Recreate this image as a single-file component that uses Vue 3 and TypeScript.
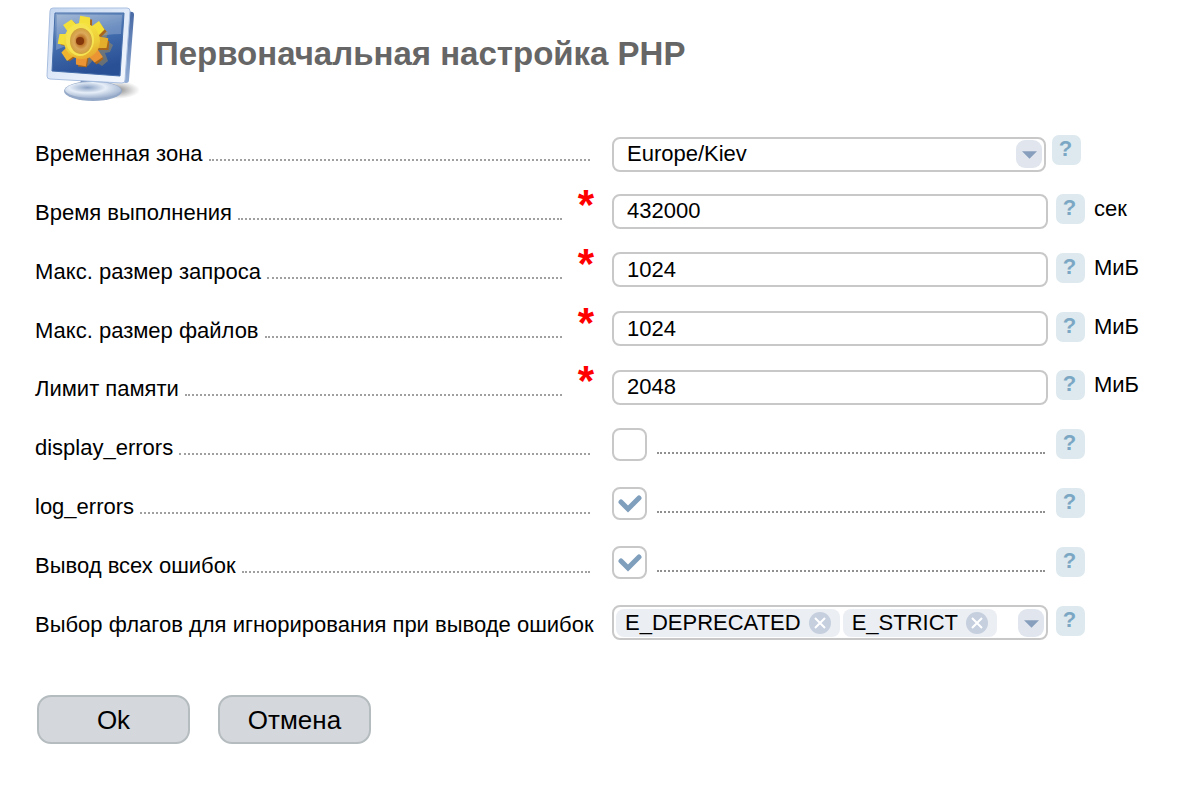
<script setup lang="ts">
import { ref } from 'vue'

type Kind = 'select' | 'text' | 'check' | 'tags'

interface Field {
  id: string
  label: string
  kind: Kind
  value?: string
  checked?: boolean
  unit?: string
}

const fields = ref<Field[]>([
  { id: 'timezone', label: 'Временная зона', kind: 'select', value: 'Europe/Kiev' },
  { id: 'exec-time', label: 'Время выполнения', kind: 'text', value: '432000', unit: 'сек' },
  { id: 'post-size', label: 'Макс. размер запроса', kind: 'text', value: '1024', unit: 'МиБ' },
  { id: 'file-size', label: 'Макс. размер файлов', kind: 'text', value: '1024', unit: 'МиБ' },
  { id: 'memory', label: 'Лимит памяти', kind: 'text', value: '2048', unit: 'МиБ' },
  { id: 'display-errors', label: 'display_errors', kind: 'check', checked: false },
  { id: 'log-errors', label: 'log_errors', kind: 'check', checked: true },
  { id: 'all-errors', label: 'Вывод всех ошибок', kind: 'check', checked: true },
  { id: 'flags', label: 'Выбор флагов для игнорирования при выводе ошибок', kind: 'tags' },
])

const tags = ref<string[]>(['E_DEPRECATED', 'E_STRICT'])
const teeth = [5, 50, 95, 140, 185, 230, 275, 320]

function toothColor(angle: number): string {
  if (angle > 130 && angle < 200) return '#eb9434'
  if (angle > 90 && angle < 130) return '#e2ae2b'
  if (angle > 200 && angle < 240) return '#efb42f'
  return '#f3e03a'
}

function removeTag(tag: string) {
  tags.value = tags.value.filter((t) => t !== tag)
}
</script>

<template>
  <main class="page">
    <header class="head">
      <svg class="logo" viewBox="0 0 96 100" aria-hidden="true">
        <defs>
          <linearGradient id="screen" x1="0" y1="0" x2="0.3" y2="1">
            <stop offset="0" stop-color="#8fa9cc" />
            <stop offset="0.45" stop-color="#4470b0" />
            <stop offset="1" stop-color="#294f94" />
          </linearGradient>
          <linearGradient id="frame" x1="0" y1="0" x2="1" y2="1">
            <stop offset="0" stop-color="#c3d5ef" />
            <stop offset="0.5" stop-color="#dfe9f8" />
            <stop offset="1" stop-color="#f6f9fe" />
          </linearGradient>
          <linearGradient id="side" x1="0" y1="0" x2="0" y2="1">
            <stop offset="0" stop-color="#4668a4" />
            <stop offset="1" stop-color="#93add4" />
          </linearGradient>
          <radialGradient id="foot" cx="0.4" cy="0.35" r="0.65">
            <stop offset="0" stop-color="#8ba2c4" />
            <stop offset="0.5" stop-color="#e6eef8" />
            <stop offset="1" stop-color="#a3b5d0" />
          </radialGradient>
          <linearGradient id="gold" gradientUnits="userSpaceOnUse" x1="28" y1="18" x2="44" y2="58">
            <stop offset="0" stop-color="#f8ea45" />
            <stop offset="0.6" stop-color="#eccb38" />
            <stop offset="1" stop-color="#e59a2c" />
          </linearGradient>
          <radialGradient id="hub">
            <stop offset="0" stop-color="#8b3d0c" />
            <stop offset="0.25" stop-color="#b4661c" />
            <stop offset="0.65" stop-color="#dca95a" />
            <stop offset="1" stop-color="#cfa03c" />
          </radialGradient>
          <radialGradient id="shadow">
            <stop offset="0" stop-color="#555" stop-opacity="0.75" />
            <stop offset="1" stop-color="#777" stop-opacity="0" />
          </radialGradient>
        </defs>
        <ellipse cx="68" cy="86" rx="24" ry="9" fill="url(#shadow)" />
        <path d="M33 74H60L62 83H32Z" fill="#6482b3" />
        <ellipse cx="45" cy="87" rx="29" ry="10" fill="#94a8c7" />
        <ellipse cx="45" cy="86" rx="28" ry="8" fill="url(#foot)" />
        <path d="M80 7L84 8Q86 8 86 11L81 76Q81 79 78 79L73 78Z" fill="url(#side)" />
        <path
          d="M5 4H79Q82 4 82 7L77 76Q77 79 74 79L2 75Q-1 75 -1 72L2 7Q2 4 5 4Z"
          fill="url(#frame)"
          stroke="#a9bfe0"
          stroke-width="1"
        />
        <path d="M7 9H76L72 72L4 67Z" fill="url(#screen)" stroke="#466eaa" stroke-width="1" />
        <path d="M9 11H74L73 30Q45 30 8 46Z" fill="#ffffff" opacity="0.22" />
        <path
          d="M54 24L60 28L58 36L65 41L62 48L57 49L60 57L54 62L45 56L40 62L34 60V30Z"
          fill="#d8a437"
          opacity="0.35"
        />
        <g fill="#a8661c" transform="translate(37 39)">
          <path v-for="a in teeth" :key="a" d="M-4 -24H5L6 -12H-5Z" :transform="`rotate(${a})`" />
        </g>
        <g transform="translate(35 37)">
          <path
            v-for="a in teeth"
            :key="a"
            d="M-5 -25L5 -24L6 -12H-6Z"
            :fill="toothColor(a)"
            :transform="`rotate(${a})`"
          />
        </g>
        <circle cx="34" cy="37" r="18" fill="url(#gold)" />
        <ellipse cx="32" cy="36" rx="14" ry="16" fill="#f6e352" />
        <ellipse cx="33" cy="37" rx="11" ry="13" fill="url(#hub)" />
        <ellipse cx="32" cy="37" rx="4" ry="4" fill="#84370b" />
      </svg>
      <h1 class="title">Первоначальная настройка PHP</h1>
    </header>

    <form class="form" @submit.prevent>
      <div class="rows">
        <div v-for="f in fields" :key="f.id" class="row" :class="`row-${f.kind}`">
          <div class="caption">
            <label class="name" :for="f.id">{{ f.label }}</label>
            <span class="dots"></span>
            <span v-if="f.kind === 'text'" class="required"><span class="star">*</span></span>
          </div>

          <div v-if="f.kind === 'select'" class="control box">
            <select :id="f.id" v-model="f.value" class="entry">
              <option>Europe/Kiev</option>
            </select>
            <span class="arrow"><svg viewBox="0 0 16 8"><path d="M0 0H16L8 8Z" /></svg></span>
          </div>

          <div v-else-if="f.kind === 'text'" class="control box">
            <input :id="f.id" v-model="f.value" class="entry" type="text" required />
          </div>

          <div v-else-if="f.kind === 'check'" class="control checkline">
            <span class="tick">
              <input :id="f.id" v-model="f.checked" type="checkbox" />
              <svg v-if="f.checked" viewBox="0 0 24 18"><path d="M3 7L10 14L21 3" /></svg>
            </span>
            <span class="dots"></span>
          </div>

          <div v-else class="control box tagbox">
            <span v-for="t in tags" :key="t" class="tag">
              {{ t }}
              <button type="button" class="remove" :aria-label="t" @click="removeTag(t)">
                <svg viewBox="0 0 22 22">
                  <circle cx="11" cy="11" r="11" />
                  <path d="M6 6L16 16M16 6L6 16" />
                </svg>
              </button>
            </span>
            <button :id="f.id" type="button" class="arrow">
              <svg viewBox="0 0 16 8"><path d="M0 0H16L8 8Z" /></svg>
            </button>
          </div>

          <div class="aside">
            <button type="button" class="help">?</button>
            <span v-if="f.unit" class="unit">{{ f.unit }}</span>
          </div>
        </div>
      </div>

      <div class="actions">
        <button type="submit" class="action">Ok</button>
        <button type="button" class="action">Отмена</button>
      </div>
    </form>
  </main>
</template>

<style>
body {
  background: #fff;
}
</style>

<style scoped>
.page,
.page * {
  box-sizing: border-box;
}
.page {
  padding: 4px 0 40px;
  font-family: 'Liberation Sans', Arial, sans-serif;
  font-size: 22px;
  line-height: 26px;
  color: #000;
}
button,
input,
select {
  margin: 0;
  padding: 0;
  border: 0;
  background: none;
  font: inherit;
  color: inherit;
}
.head {
  display: flex;
  align-items: center;
  gap: 11px;
  padding-left: 48px;
}
.logo {
  width: 96px;
  height: 100px;
  overflow: visible;
}
.title {
  margin: 0;
  font-size: 33px;
  line-height: 40px;
  color: #666;
}
.form {
  padding-top: 21px;
}
.rows {
  display: grid;
  grid-auto-rows: 1fr;
  min-height: 529px;
  padding-left: 35px;
}
.row {
  display: grid;
  grid-template-columns: minmax(0, 577fr) minmax(0, 436fr) 152px;
  align-items: center;
}
.row-select {
  grid-template-columns: minmax(0, 577fr) minmax(0, 434fr) 154px;
}
.caption {
  display: flex;
  align-items: baseline;
  gap: 6px;
  padding-right: 22px;
}
.name {
  white-space: nowrap;
}
.dots {
  flex: 1;
  border-bottom: 2px dotted #a0a0a0;
}
.required {
  position: relative;
  width: 22px;
}
.star {
  position: absolute;
  right: -4px;
  bottom: -6px;
  font-size: 42px;
  font-weight: bold;
  line-height: 42px;
  color: #f00;
}
.control {
  margin-bottom: 4px;
}
.row-select .control {
  margin-bottom: 0;
}
.row-check .control {
  margin-bottom: 7px;
}
.box {
  display: flex;
  align-items: center;
  height: 35px;
  border: 2px solid #c8c8c8;
  border-radius: 8px;
  background: #fff;
}
.entry {
  flex: 1;
  min-width: 0;
  height: 100%;
  padding: 0 13px;
  outline: none;
  appearance: none;
}
.arrow {
  display: flex;
  flex: none;
  align-items: center;
  justify-content: center;
  width: 26px;
  height: 28px;
  margin-right: 2px;
  padding-top: 2px;
  border-radius: 9px;
  background: #e1e6ee;
}
.arrow svg {
  width: 15px;
  height: 8px;
  fill: #879fbd;
}
.tagbox {
  gap: 3px;
  padding-left: 2px;
}
.tagbox .arrow {
  margin-left: auto;
}
.tag {
  display: flex;
  align-items: center;
  gap: 8px;
  height: 28px;
  padding: 0 9px;
  border-radius: 8px;
  background: #ebeef3;
}
.remove {
  width: 22px;
  height: 22px;
}
.remove svg {
  display: block;
  fill: #c5cfde;
  stroke: #fff;
  stroke-width: 2;
}
.remove circle {
  stroke: none;
}
.checkline {
  display: flex;
  align-items: center;
  gap: 10px;
  padding-right: 3px;
}
.checkline .dots {
  margin-top: 17px;
  border-color: #909090;
}
.tick {
  position: relative;
  width: 35px;
  height: 33px;
}
.tick input {
  display: block;
  width: 100%;
  height: 100%;
  border: 2px solid #c8c8c8;
  border-radius: 8px;
  background: #fff;
  appearance: none;
}
.tick svg {
  position: absolute;
  top: 8px;
  left: 6px;
  width: 24px;
  height: 18px;
  fill: none;
  stroke: #7f9fbd;
  stroke-width: 5;
  stroke-linecap: round;
  pointer-events: none;
}
.aside {
  display: flex;
  align-items: center;
  gap: 9px;
  margin-bottom: 8px;
  padding-left: 8px;
}
.row-select .aside {
  padding-left: 6px;
}
.help {
  width: 29px;
  height: 30px;
  padding: 0 2px 2px 0;
  border-radius: 7px;
  background: #dde9ee;
  font-size: 22px;
  font-weight: bold;
  line-height: 28px;
  color: #7ba7c4;
}
.actions {
  display: flex;
  gap: 28px;
  padding: 41px 0 0 37px;
}
.action {
  width: 153px;
  height: 49px;
  border: 2px solid #b5bcbf;
  border-radius: 14px;
  background: #d4d7dc;
  font-size: 26px;
}
</style>
